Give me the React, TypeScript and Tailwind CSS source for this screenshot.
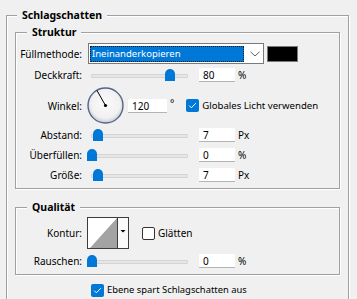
import type { ReactNode } from "react";

const FONT = "font-['Noto_Sans','Liberation_Sans',sans-serif]";

function Group({ title, className, legendLeft, children }: { title: string; className?: string; legendLeft: string; children: ReactNode }) {
  return (
    <div className={`relative border border-[#a0a0a0] shadow-[inset_1px_1px_0_#fff,1px_1px_0_#fff] ${className ?? ""}`}>
      <span className={`absolute -top-[8px] ${legendLeft} bg-[#f0f0f0] px-[5px] text-[10.5px] font-bold leading-[15px] text-black`}>
        {title}
      </span>
      {children}
    </div>
  );
}

function Label({ children }: { children: ReactNode }) {
  return <span className="w-[66px] shrink-0 text-right leading-[14px]">{children}</span>;
}

function Slider({ thumb }: { thumb: string }) {
  return (
    <div className="relative ml-[-1px] h-[14px] w-[103px] shrink-0">
      <div className="absolute left-[4px] right-[2px] top-[6px] h-[4px] rounded-[1px] border border-[#d4d4d4] bg-[#e6e6e6]" />
      <div className={`absolute top-[1px] h-[12px] w-[10px] rounded-t-[5px] bg-[#0078d7] ${thumb}`} />
    </div>
  );
}

function Field({ value, className }: { value: string; className?: string }) {
  return (
    <div className={`h-[14px] shrink-0 border-b border-[#b4b4b4] bg-white pl-[4px] leading-[14px] ${className ?? "w-[36px]"}`}>
      {value}
    </div>
  );
}

function Check() {
  return (
    <span className="flex h-[13px] w-[13px] shrink-0 items-center justify-center rounded-[2px] bg-[#0078d7]">
      <svg width="9" height="9" viewBox="0 0 9 9">
        <path d="M1.2 4.6 L3.4 6.8 L7.8 2.2" fill="none" stroke="#fff" strokeWidth="1" />
      </svg>
    </span>
  );
}

function SliderRow({ label, thumb, value, unit }: { label: string; thumb: string; value: string; unit: string }) {
  return (
    <div className="flex h-[14px] items-center">
      <Label>{label}</Label>
      <div className="ml-[6px] flex items-center">
        <Slider thumb={thumb} />
        <Field value={value} className="ml-[9px] w-[36px]" />
        <span className="ml-[3px] leading-[14px]">{unit}</span>
      </div>
    </div>
  );
}

function Dial() {
  return (
    <svg width="37" height="37" viewBox="0 0 37 37" className="shrink-0">
      <defs>
        <radialGradient id="dial" cx="50%" cy="45%" r="55%">
          <stop offset="0" stopColor="#fbfbfb" />
          <stop offset="0.75" stopColor="#f1f1f1" />
          <stop offset="1" stopColor="#c9cad0" />
        </radialGradient>
      </defs>
      <circle cx="18.5" cy="18.5" r="17.5" fill="url(#dial)" stroke="#55648c" strokeWidth="1.4" />
      <line x1="18.5" y1="18.5" x2="10" y2="3.5" stroke="#000" strokeWidth="1" />
      <circle cx="18.5" cy="18.5" r="1.6" fill="#000" />
    </svg>
  );
}

function Contour() {
  return (
    <svg width="42" height="32" viewBox="0 0 42 32" className="shrink-0">
      <rect x="0.5" y="0.5" width="41" height="31" fill="#fff" stroke="#3c3c3c" />
      <polygon points="3,31 30,1 30,31" fill="#a3a3a3" />
      <line x1="30.5" y1="0.5" x2="30.5" y2="31.5" stroke="#3c3c3c" />
      <rect x="31" y="1" width="10" height="30" fill="#fafafa" />
      <polygon points="33.5,13 38.5,13 36,15.5" fill="#000" />
    </svg>
  );
}

export default function App() {
  return (
    <div className={`h-[299px] w-[357px] overflow-hidden bg-[#f0f0f0] pt-[15px] text-[10px] text-black ${FONT}`}>
      <Group title="Schlagschatten" legendLeft="left-[10px]" className="ml-[6px] mr-[8px] h-[300px] px-[8px] pt-[16px]">
        <Group title="Struktur" legendLeft="left-[11px]" className="pb-[6px] pt-[10px]">
          <div className="flex flex-col">
            <div className="flex h-[21px] items-center">
              <Label>Füllmethode:</Label>
              <div className="ml-[6px] flex h-[21px] w-[176px] items-center border border-[#7a7a7a] bg-white pl-[1px]">
                <span className="flex h-[16px] w-[154px] items-center border border-dotted border-[#1a1a1a] bg-[#0078d7] pl-[1px] text-[9.5px] leading-[14px] text-white">
                  Ineinanderkopieren
                </span>
                <svg width="10" height="6" viewBox="0 0 10 6" className="ml-[6px]">
                  <path d="M0.5 0.8 L5 5 L9.5 0.8" fill="none" stroke="#606060" strokeWidth="1" />
                </svg>
              </div>
              <div className="ml-[3px] h-[16px] w-[31px] border border-[#7a7a7a] bg-black" />
            </div>

            <div className="mt-[4px]">
              <SliderRow label="Deckkraft:" thumb="left-[78px]" value="80" unit="%" />
            </div>

            <div className="mt-[5px] flex h-[37px] items-center">
              <Label>Winkel:</Label>
              <div className="ml-[5px] flex items-center">
                <Dial />
                <Field value="120" className="ml-[4px] w-[39px]" />
                <span className="mb-[6px] ml-[3px] leading-[10px]">°</span>
                <span className="ml-[12px] flex items-center">
                  <Check />
                  <span className="ml-[3px] text-[9.6px] leading-[14px]">Globales Licht verwenden</span>
                </span>
              </div>
            </div>

            <div className="mt-[4px] flex flex-col gap-[6px]">
              <SliderRow label="Abstand:" thumb="left-[6px]" value="7" unit="Px" />
              <SliderRow label="Überfüllen:" thumb="left-[0px]" value="0" unit="%" />
              <SliderRow label="Größe:" thumb="left-[6px]" value="7" unit="Px" />
            </div>
          </div>
        </Group>

        <Group title="Qualität" legendLeft="left-[11px]" className="mt-[18px] pb-[6px] pt-[9px]">
          <div className="flex h-[32px] items-center">
            <Label>Kontur:</Label>
            <div className="ml-[5px] flex items-center">
              <Contour />
              <span className="ml-[13px] h-[13px] w-[13px] rounded-[2px] border border-[#333] bg-white" />
              <span className="ml-[3px] leading-[14px]">Glätten</span>
            </div>
          </div>
          <div className="mt-[5px]">
            <SliderRow label="Rauschen:" thumb="left-[0px]" value="0" unit="%" />
          </div>
        </Group>

        <div className="ml-[76px] mt-[8px] flex items-center">
          <Check />
          <span className="ml-[3px] text-[9.4px] leading-[14px]">Ebene spart Schlagschatten aus</span>
        </div>
      </Group>
    </div>
  );
}
